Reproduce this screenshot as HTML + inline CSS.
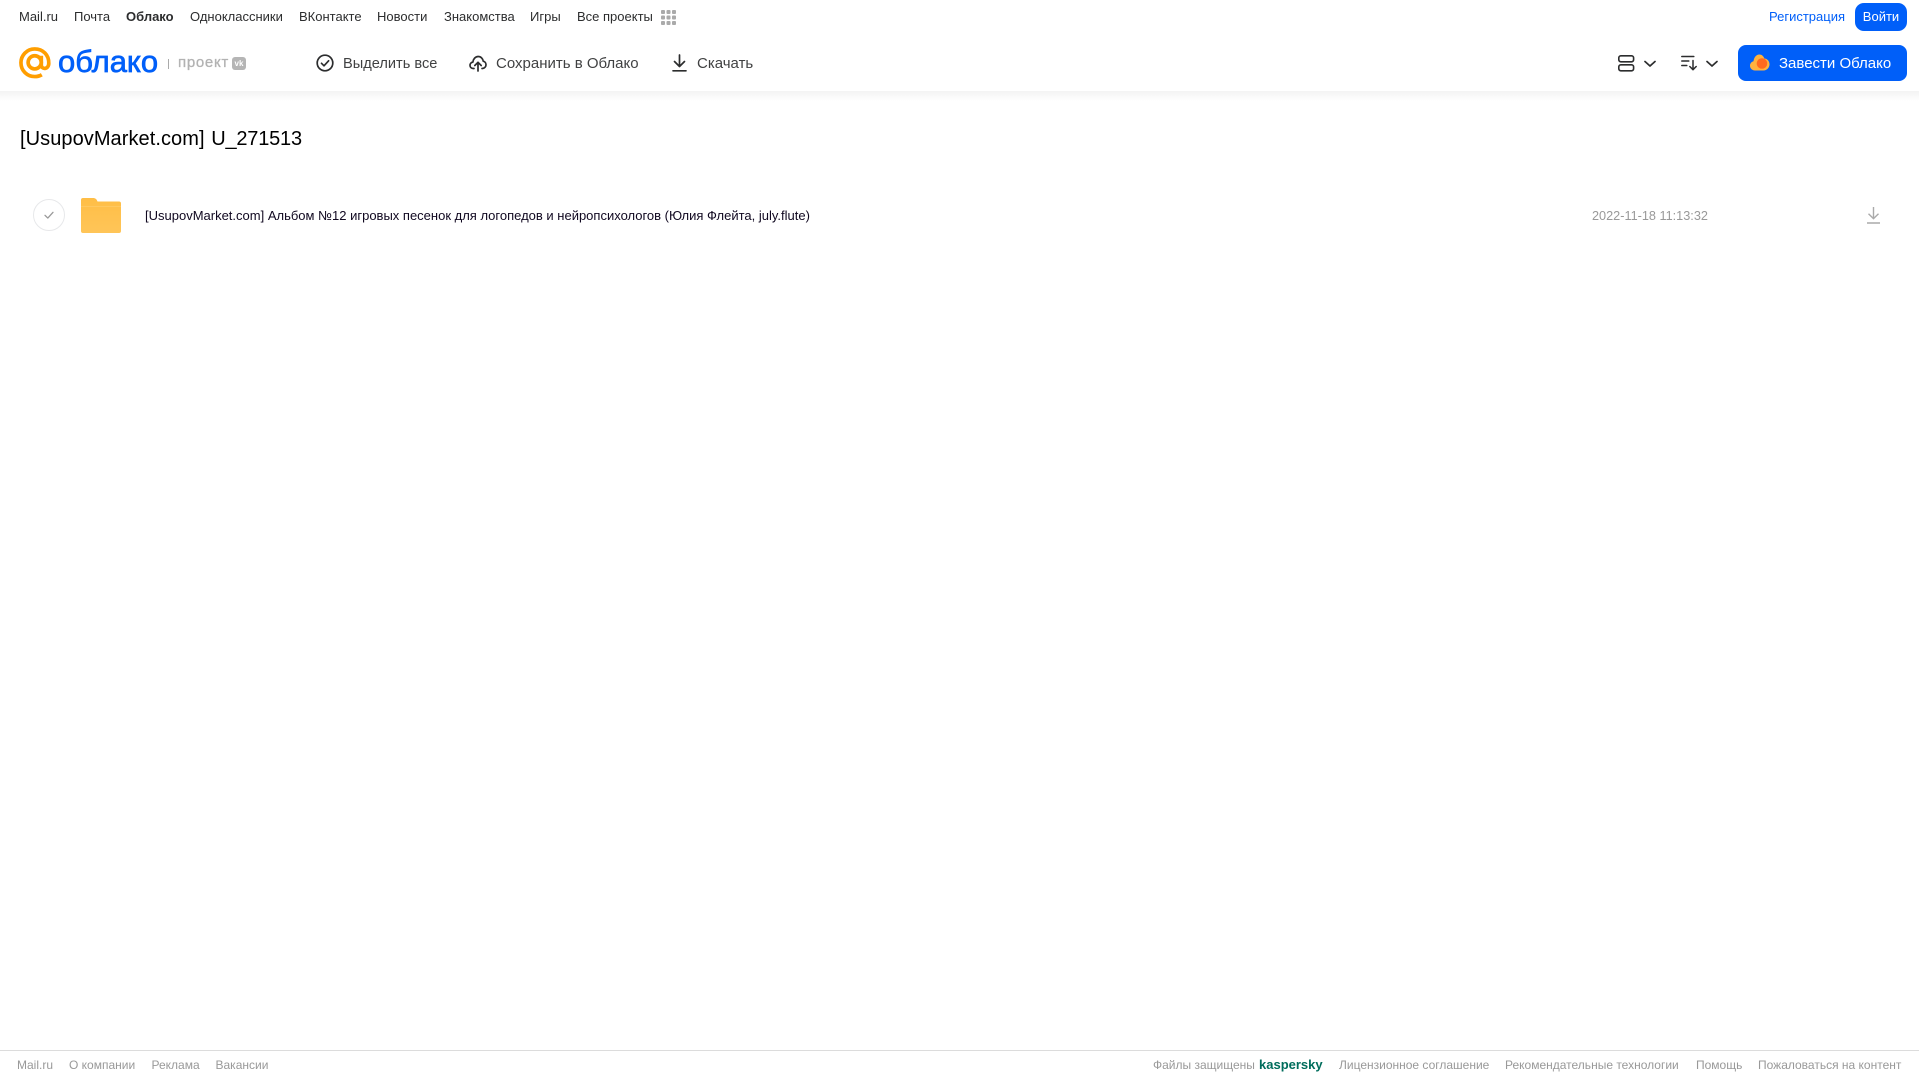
<!DOCTYPE html>
<html lang="ru">
<head>
<meta charset="utf-8">
<title>Облако</title>
<style>
html,body{margin:0;padding:0;background:#fff;width:1919px;height:1079px;overflow:hidden;font-family:"Liberation Sans",Arial,sans-serif}
.t{position:absolute;white-space:nowrap;line-height:20px;height:20px}
.n{top:7px;font-size:13px;color:#2c2d2e}
.b{top:54px;font-size:15px;color:#2c2d2e;opacity:.9}
.f{top:1055px;font-size:12px;color:#999}
svg{position:absolute;overflow:visible}
#hs{position:absolute;left:0;top:91px;width:1919px;height:10px;background:linear-gradient(#f3f3f3,#fff)}
</style>
</head>
<body>
<div id="hs"></div>

<a class="t n" style="left:19px">Mail.ru</a>
<a class="t n" style="left:74px">Почта</a>
<a class="t n" style="left:126px;font-weight:bold">Облако</a>
<a class="t n" style="left:190px">Одноклассники</a>
<a class="t n" style="left:299px">ВКонтакте</a>
<a class="t n" style="left:377px">Новости</a>
<a class="t n" style="left:444px">Знакомства</a>
<a class="t n" style="left:530px">Игры</a>
<a class="t n" style="left:577px">Все проекты</a>
<svg style="left:661px;top:10px" width="15" height="15" fill="#aaa">
<rect x="0" y="0" width="4" height="4" rx="1"/><rect x="5.500" y="0" width="4" height="4" rx="1"/><rect x="11" y="0" width="4" height="4" rx="1"/>
<rect x="0" y="5.500" width="4" height="4" rx="1"/><rect x="5.500" y="5.500" width="4" height="4" rx="1"/><rect x="11" y="5.500" width="4" height="4" rx="1"/>
<rect x="0" y="11" width="4" height="4" rx="1"/><rect x="5.500" y="11" width="4" height="4" rx="1"/><rect x="11" y="11" width="4" height="4" rx="1"/>
</svg>

<a class="t" style="left:1769px;top:7px;font-size:13px;color:#005ff9">Регистрация</a>
<div style="position:absolute;left:1855px;top:3px;width:52px;height:28px;border-radius:9px;background:#005ff9"></div>
<a class="t" style="left:1855px;top:7px;width:52px;text-align:center;font-size:13px;color:#fff">Войти</a>

<!-- logo -->
<svg style="left:19px;top:47px" width="32" height="32" viewBox="0 0 33 33" fill="none" stroke="#ff9e00" stroke-width="3.800">
<circle cx="16.200" cy="15.800" r="6.800"/>
<path d="M23 9v9.500c0 5 7.500 5 7.700-1.500C31 8 24.500 2 16.200 2 8.200 2 2 8.500 2 16.200 2 24.500 8.500 30.500 16.200 30.500c3 0 5.300-.7 7.300-1.900"/>
</svg>
<div class="t" style="left:58px;top:44px;height:36px;line-height:36px;font-size:31px;color:#005ff9;-webkit-text-stroke:.7px #005ff9">облако</div>
<div style="position:absolute;left:168px;top:59px;width:1px;height:10px;background:#aaa"></div>
<div class="t" style="left:178px;top:53px;font-size:15px;color:#b2b2b2;letter-spacing:.7px;-webkit-text-stroke:.3px #b2b2b2">проект</div>
<div style="position:absolute;left:232px;top:57px;width:14px;height:13px;border-radius:3px;background:#b5b5b5;color:#fff;font-size:8px;font-weight:bold;line-height:13px;text-align:center">vk</div>

<!-- toolbar -->
<svg style="left:316px;top:54px" width="18" height="18" viewBox="0 0 18 18" fill="none" stroke="#2c2d2e" stroke-width="1.700">
<circle cx="9" cy="9" r="7.800"/><path d="M5.500 9.300l2.500 2.500 4.600-5" stroke-linecap="round" stroke-linejoin="round"/>
</svg>
<a class="t b" style="left:343px;font-size:14.600px">Выделить все</a>
<svg style="left:469px;top:54px" width="18" height="18" viewBox="0 0 18 18" fill="none" stroke="#2c2d2e" stroke-width="1.700" stroke-linecap="round" stroke-linejoin="round">
<path d="M5 14.500H4.300C2.300 14.500 1 13 1 11.300c0-1.700 1.200-3 2.900-3.200C4.200 5 6.400 2.500 9.200 2.500c2.600 0 4.700 2 5 4.700 1.600.3 2.800 1.800 2.800 3.500 0 2-1.500 3.800-3.700 3.800H13"/>
<path d="M9 17V8.500M5.800 11.500L9 8.300l3.200 3.200"/>
</svg>
<a class="t b" style="left:496px">Сохранить в Облако</a>
<svg style="left:672px;top:54px" width="15" height="18" viewBox="0 0 15 18" fill="none" stroke="#2c2d2e" stroke-width="1.700" stroke-linecap="round" stroke-linejoin="round">
<path d="M7.500 1v11M2.500 7.500l5 5 5-5M1 16.800h13"/>
</svg>
<a class="t b" style="left:697px">Скачать</a>

<!-- right tools -->
<svg style="left:1618px;top:55px" width="17" height="17" viewBox="0 0 17 17" fill="none" stroke="#2c2d2e" stroke-width="1.600">
<rect x=".8" y=".8" width="14.800" height="6" rx="2"/><rect x=".8" y="9.800" width="14.800" height="6" rx="2"/>
</svg>
<svg style="left:1644px;top:60px" width="12" height="8" viewBox="0 0 12 8" fill="none" stroke="#2c2d2e" stroke-width="1.700" stroke-linecap="round" stroke-linejoin="round"><path d="M1 1.500l5 4.500 5-4.500"/></svg>
<svg style="left:1681px;top:55px" width="16" height="16" viewBox="0 0 16 16" fill="none" stroke="#2c2d2e" stroke-width="1.500" stroke-linecap="round" stroke-linejoin="round">
<path d="M.8 1.500h12M.8 6h7M.8 10.500h5M12 5.500v9M8.800 11.500l3.200 3.200 3.200-3.200"/>
</svg>
<svg style="left:1706px;top:60px" width="12" height="8" viewBox="0 0 12 8" fill="none" stroke="#2c2d2e" stroke-width="1.700" stroke-linecap="round" stroke-linejoin="round"><path d="M1 1.500l5 4.500 5-4.500"/></svg>

<div style="position:absolute;left:1738px;top:45px;width:169px;height:36px;border-radius:8px;background:#005ff9"></div>
<svg style="left:1750px;top:54px" width="20" height="17" viewBox="0 0 20 17">
<path d="M5 16.500C2.200 16.500 0 14.500 0 11.800 0 9.500 1.500 7.800 3.500 7.300 4 3.300 6.300.5 9.300.5c2.500 0 4.300 1.700 5 4 3 .2 5.200 2.700 5.200 5.800 0 3.400-2.600 6.200-6 6.200z" fill="#ffb23e"/>
<circle cx="12" cy="9.500" r="5.300" fill="#ff6a1f"/>
</svg>
<a class="t" style="left:1779px;top:54px;font-size:15px;color:#fff">Завести Облако</a>

<!-- title -->
<div class="t" style="left:20px;top:125px;height:28px;line-height:28px;font-size:20px;color:#000;letter-spacing:.066px;word-spacing:1px">[UsupovMarket.com] <span style="letter-spacing:-.2px">U_271513</span></div>

<!-- row -->
<svg style="left:33px;top:199px" width="32" height="32" viewBox="0 0 32 32" fill="none">
<circle cx="16" cy="16" r="15.500" stroke="#e7e8ea"/>
<path d="M12 16.300l2.800 2.800 5.200-5.800" stroke="#999" stroke-width="1.300" stroke-linecap="round" stroke-linejoin="round"/>
</svg>
<svg style="left:81px;top:198px" width="40" height="35" viewBox="0 0 40 35">
<defs><linearGradient id="g" x1="0" y1="0" x2="0" y2="1"><stop offset="0" stop-color="#ffbe46"/><stop offset="1" stop-color="#ffc558"/></linearGradient></defs>
<path d="M2 0h10c2.500 0 3.500 1 4.500 3.500H38a2 2 0 0 1 2 2V33a2 2 0 0 1-2 2H2a2 2 0 0 1-2-2V2a2 2 0 0 1 2-2z" fill="url(#g)"/>
<rect x="0" y="8" width="40" height="1" fill="#ffc860"/>
</svg>
<div class="t" style="left:145px;top:206px;font-size:13px;color:#100820">[UsupovMarket.com] Альбом №12 игровых песенок для логопедов и нейропсихологов (Юлия Флейта, july.flute)</div>
<div class="t" style="left:1592px;top:206px;font-size:12.700px;color:#999">2022-11-18 11:13:32</div>
<svg style="left:1867px;top:207px" width="13" height="17" viewBox="0 0 13 17" fill="none" stroke="#aaa" stroke-width="1.400">
<path d="M6.500 0v11.500M1.500 6.800l5 4.800 5-4.800M0 16h13"/>
</svg>

<!-- footer -->
<div style="position:absolute;left:0;top:1050px;width:1919px;height:1px;background:#dcdcdc"></div>
<a class="t f" style="left:17px">Mail.ru</a>
<a class="t f" style="left:69px">О компании</a>
<a class="t f" style="left:151.500px">Реклама</a>
<a class="t f" style="left:215.500px">Вакансии</a>
<a class="t f" style="left:1153px">Файлы защищены</a>
<a class="t f" style="left:1259px;font-weight:bold;font-size:13px;color:#006d5c">kaspersky</a>
<a class="t f" style="left:1339px">Лицензионное соглашение</a>
<a class="t f" style="left:1505px">Рекомендательные технологии</a>
<a class="t f" style="left:1696px">Помощь</a>
<a class="t f" style="left:1758px">Пожаловаться на контент</a>
</body>
</html>
